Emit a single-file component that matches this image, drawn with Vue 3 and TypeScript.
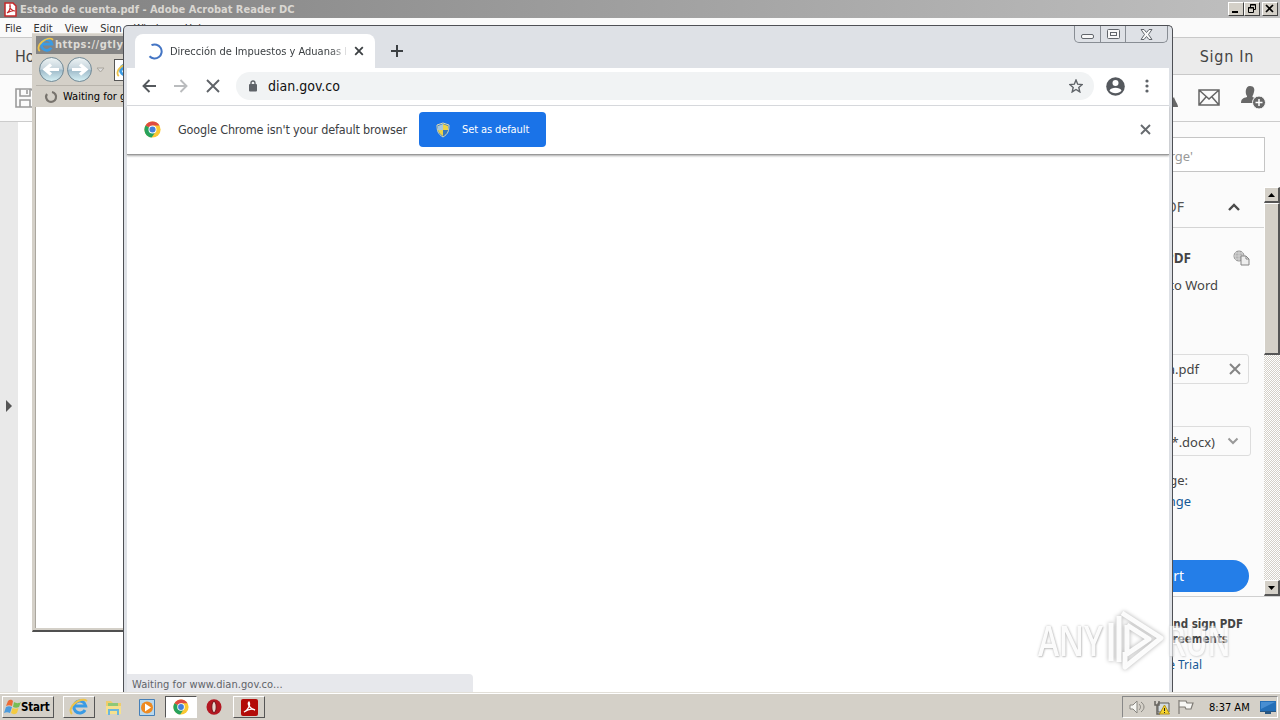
<script setup lang="ts">
const menus: string[] = ['File', 'Edit', 'View', 'Sign', 'Window', 'Help']
</script>

<template>
  <main class="desktop">
    <section class="acrobat">
      <header class="titlebar">
        <svg class="app-icon" width="13" height="15" viewBox="0 0 13 15"><path d="M1 1h8l3 3v10H1z" fill="#fff" stroke="#c4282a" stroke-width="1.5" /><path d="M3 11c2-1 4-5 3-8-1 3 2 6 5 6-3-1-6 1-8 2z" fill="none" stroke="#c4282a" stroke-width="1.2" /></svg>
        <b class="title-text">Estado de cuenta.pdf - Adobe Acrobat Reader DC</b>
        <div class="win-buttons">
          <i><svg width="14" height="12" viewBox="0 0 14 12"><path d="M3 9h6" stroke="#000" stroke-width="2" /></svg></i>
          <i><svg width="14" height="12" viewBox="0 0 14 12" fill="none" stroke="#000"><path d="M5.500 4V1.500h5v5H9M5 2h6M3.500 4.500h5v5h-5zM3 5h6" /></svg></i>
          <i class="gap"><svg width="14" height="12" viewBox="0 0 14 12"><path d="M3 2l7 7M10 2L3 9" stroke="#000" stroke-width="1.7" /></svg></i>
        </div>
      </header>
      <nav class="menubar"><span v-for="m in menus" :key="m" :class="m.toLowerCase()">{{ m }}</span></nav>
      <div class="hometabs"><span>Home</span><span class="signin">Sign In</span></div>
      <div class="tools">
        <svg class="save" width="20" height="20" viewBox="0 0 20 20" fill="none" stroke="#9b9b9b" stroke-width="1.6"><path d="M1 1h15l3 3v15H1zM5 1v7h10V1M12 2v4M5 19v-7h10v7" /></svg>
        <div class="tool-right">
          <svg width="12" height="22" viewBox="0 0 12 22"><path d="M3 20C5 13 7 11 8 10c1 4 4 7 4 10z" fill="#686868" /></svg>
          <svg class="mail" width="22" height="17" viewBox="0 0 22 17" fill="none" stroke="#666" stroke-width="1.5"><path d="M1 1h20v15H1zM1 1l10 9L21 1M1 16l7-8M21 16l-7-8" /></svg>
          <svg width="25" height="23" viewBox="0 0 25 23"><path d="M9 0c4 0 5 3 4 6-.5 2-1 3-1.500 4v1c3 1 4 2 4 6H0c0-4 2-5 6-6v-1C4 8 4 0 9 0" fill="#686868" /><circle cx="18" cy="16.500" r="6.500" fill="#686868" stroke="#fbfbfb" /><path d="M14.500 16.500h7M18 13v7" stroke="#fff" stroke-width="1.500" /></svg>
        </div>
      </div>
      <div class="acro-body">
        <aside class="left-rail"><svg width="8" height="12" viewBox="0 0 8 12"><path d="M1 0l6 6-6 6z" fill="#555" /></svg></aside>
        <div class="document"></div>
        <aside class="panel">
          <div class="search">Search 'Merge'</div>
          <div class="panel-scroll">
            <div class="panel-content">
              <div class="panel-head"><span>Export PDF</span><svg width="14" height="9" viewBox="0 0 14 9"><path d="M2 7l5-5 5 5" fill="none" stroke="#4a4a4a" stroke-width="2.400" /></svg></div>
              <div class="panel-title"><b>Adobe Export PDF</b><svg width="17" height="16" viewBox="0 0 17 16"><circle cx="6" cy="6" r="5" fill="#b4b4b4" stroke="#8f8f8f" /><path d="M1 6h10M6 1v10M2.500 3h7M2.500 9h7M3.500 2c-2 3-2 5 0 8M8.500 2c2 3 2 5 0 8" stroke="#ddd" stroke-width=".7" fill="none" /><path d="M8 6h5l3 3v6H8zM13 6v3h3" fill="#eee" stroke="#858585" /></svg></div>
              <div class="convert">Convert PDF Files to Word</div>
              <div class="filebox"><span>Estado de cuenta.pdf</span><svg width="12" height="12" viewBox="0 0 12 12"><path d="M1 1l10 10M11 1L1 11" stroke="#858585" stroke-width="2" /></svg></div>
              <div class="format"><span>Microsoft Word (*.docx)</span><svg width="12" height="8" viewBox="0 0 12 8"><path d="M1.500 1.500L6 6l4.500-4.500" fill="none" stroke="#999" stroke-width="2" /></svg></div>
              <div class="language">Document Language:</div>
              <div class="change">Change</div>
              <div class="convert-button">Convert</div>
            </div>
            <div class="scrollbar">
              <i class="up"><svg width="7" height="4" viewBox="0 0 7 4"><path d="M0 4l3.500-4L7 4z" /></svg></i>
              <i class="thumb"></i><i class="track"></i>
              <i class="down"><svg width="7" height="4" viewBox="0 0 7 4"><path d="M0 0h7L3.500 4z" /></svg></i>
            </div>
          </div>
          <footer class="panel-foot"><b>Create, edit and sign PDF</b><b class="second">forms &amp; agreements</b><span>Start Free Trial</span></footer>
        </aside>
      </div>
    </section>

    <section class="explorer">
      <header class="ie-title">
        <svg width="18" height="16" viewBox="0 0 20 18"><path d="M16 12a6 6 0 1 1 .7-4H6" fill="none" stroke="#3a9be4" stroke-width="3" /><path d="M3 16C-3 10 11-2 18 3" fill="none" stroke="#edc34b" stroke-width="2" /></svg>
        <b>https://gtly.to/</b>
      </header>
      <div class="ie-nav">
        <svg width="60" height="30" viewBox="0 0 60 30"><defs><linearGradient id="ball" x2="0" y2="1"><stop stop-color="#eef4f5" /><stop offset=".48" stop-color="#c6d4dc" /><stop offset=".52" stop-color="#9db9c8" /><stop offset="1" stop-color="#d8f2f6" /></linearGradient></defs><g fill="url(#ball)" stroke="#718894"><circle cx="15.500" cy="14.500" r="12" /><circle cx="43.500" cy="14.500" r="12" /></g><path d="M23 14.500H10m5-5-6 5 6 5M36 14.500h13m-5-5 6 5-6 5" fill="none" stroke="#fff" stroke-width="3.200" /></svg>
        <svg class="drop" width="9" height="6" viewBox="0 0 9 6"><path d="M1 1h7L4.500 5z" fill="#ddd" stroke="#aaa69e" /></svg>
        <div class="ie-address"><svg width="18" height="16" viewBox="0 0 20 18"><path d="M16 12a6 6 0 1 1 .7-4H6" fill="none" stroke="#3a9be4" stroke-width="3" /><path d="M3 16C-3 10 11-2 18 3" fill="none" stroke="#edc34b" stroke-width="2" /></svg></div>
      </div>
      <div class="ie-tab"><svg width="14" height="14" viewBox="0 0 14 14"><path d="M8 2a5 5 0 1 1-5 2" fill="none" stroke="#77736d" stroke-width="2.200" /></svg><span>Waiting for gtly.to</span></div>
      <div class="ie-page"></div>
    </section>

    <section class="chrome">
      <div class="tabstrip">
        <div class="tab">
          <svg class="spinner" width="16" height="18" viewBox="0 0 16 18"><path d="M4.500 3.200a7 7 0 1 1-2 11" fill="none" stroke="#4475c4" stroke-width="2" /></svg>
          <span class="tab-title">Dirección de Impuestos y Aduanas Nacionales</span>
          <svg width="10" height="10" viewBox="0 0 10 10"><path d="M1.200 1.200l7.600 7.600M8.800 1.200L1.200 8.800" stroke="#3c4043" stroke-width="1.800" /></svg>
        </div>
        <svg class="plus" width="12" height="12" viewBox="0 0 12 12"><path d="M6 0v12M0 6h12" stroke="#3c4043" stroke-width="2" /></svg>
        <div class="caption">
          <i><svg class="minimize" width="13" height="5" viewBox="0 0 13 5"><rect x=".5" y=".5" width="12" height="4" rx="1.500" /></svg></i>
          <i><svg width="13" height="10" viewBox="0 0 13 10"><rect x=".5" y=".5" width="12" height="9" rx="1" /><rect x="3.500" y="3.500" width="6" height="3" /></svg></i>
          <i><svg width="13" height="11" viewBox="0 0 13 11"><path d="M1 .5h3l2.500 3 2.500-3h3L8.500 5.500l3.500 5H9l-2.500-3-2.500 3H1l3.500-5z" /></svg></i>
        </div>
      </div>
      <div class="toolbar">
        <svg width="14" height="14" viewBox="0 0 14 14"><path d="M14 7H1M7.500 1L1.500 7l6 6" fill="none" stroke="#55595d" stroke-width="1.900" /></svg>
        <svg width="14" height="14" viewBox="0 0 14 14"><path d="M0 7h13M6.500 1l6 6-6 6" fill="none" stroke="#babcbe" stroke-width="1.900" /></svg>
        <svg width="14" height="14" viewBox="0 0 14 14"><path d="M1 1l12 12M13 1L1 13" stroke="#5f6368" stroke-width="1.900" /></svg>
        <div class="omnibox">
          <svg width="8" height="12" viewBox="0 0 8 12"><path d="M2 5V3a2 2 0 0 1 4 0v2" fill="none" stroke="#5f6368" stroke-width="1.400" /><rect y="4" width="8" height="7.500" rx="1" fill="#5f6368" /></svg>
          <span>dian.gov.co</span>
          <svg class="star" width="14" height="14" viewBox="0 0 14 14"><path d="M7 1l1.700 4.200 4.500.4-3.400 2.900 1 4.400L7 10.500l-3.800 2.400 1-4.400L.8 5.600l4.500-.4z" fill="none" stroke="#5f6368" stroke-width="1.400" /></svg>
        </div>
        <svg class="avatar" width="19" height="19" viewBox="0 0 19 19"><circle cx="9.500" cy="9.500" r="9.300" fill="#55595e" /><circle cx="9.500" cy="6" r="3" fill="#fff" /><path d="M3.500 13.500C5 9.800 14 9.800 15.500 13.500 13 17 6 17 3.500 13.500" fill="#fff" /></svg>
        <svg class="dots" width="4" height="14" viewBox="0 0 4 14" fill="#5f6368"><circle cx="2" cy="2" r="1.600" /><circle cx="2" cy="7" r="1.600" /><circle cx="2" cy="12" r="1.600" /></svg>
      </div>
      <div class="infobar">
        <svg width="17" height="17" viewBox="0 0 20 20"><circle cx="10" cy="10" r="9.500" fill="#fac832" /><path d="M10 10L1.800 5.200A9.500 9.500 0 0 1 18.200 5.200H10z" fill="#df4b42" /><path d="M10 10L1.800 5.200A9.500 9.500 0 0 0 9 19.500L14 12z" fill="#27a25d" /><circle cx="10" cy="10" r="4.700" fill="#fff" /><circle cx="10" cy="10" r="3.600" fill="#437fda" /></svg>
        <span class="info-text">Google Chrome isn't your default browser</span>
        <div class="default-button"><svg width="14" height="16" viewBox="0 0 14 16"><path d="M7 1l6 2c0 6-1 9-6 12C2 12 1 9 1 3z" fill="#3578bc" stroke="#ddd8b2" /><path d="M7 2l5 2v4H7zM2 8h5v6C4 12 2.500 10 2 8" fill="#ecd347" /><path d="M2 4l5-2v6H2z" fill="#a8c8dc" /></svg><span>Set as default</span></div>
        <svg class="info-close" width="11" height="11" viewBox="0 0 11 11"><path d="M1 1l9 9M10 1l-9 9" stroke="#676b6f" stroke-width="1.900" /></svg>
      </div>
      <div class="page"><div class="status">Waiting for www.dian.gov.co...</div></div>
    </section>

    <div class="watermark">
      <span>ANY</span>
      <svg width="62" height="64" viewBox="0 0 62 64"><path d="M6 15v38M14 8v46M17 5l39 25-36 29V44M22 17l22 14-22 15V17" /></svg>
      <span class="run">RUN</span>
    </div>

    <footer class="taskbar">
      <div class="start"><svg width="17" height="16" viewBox="0 0 17 16"><path d="M4 2c2-2 4-1 5 0L8 7C6 6 4 6 2 7z" fill="#ed6b36" /><path d="M10 3c2 1 4 2 7 0l-2 5c-2 1-4 1-6 0z" fill="#77bd55" /><path d="M2 8c2-1 4-1 6 0l-2 6c-2-1-4-1-6 0z" fill="#4c9bdd" /><path d="M8.500 9c2 1 4 1 6 0l-1.500 5c-3 2-4 1-6 0z" fill="#f4cb42" /></svg><b>Start</b></div>
      <div class="task raised"><svg width="20" height="18" viewBox="0 0 20 18"><path d="M16 12a6 6 0 1 1 .7-4H6" fill="none" stroke="#3a9be4" stroke-width="3" /><path d="M3 16C-3 10 11-2 18 3" fill="none" stroke="#edc34b" stroke-width="2" /></svg></div>
      <div class="task folder"><svg width="17" height="17" viewBox="0 0 17 17"><path d="M1 2h5l2 2h8v11H1z" fill="#efcd6c" /><path d="M3 4h10v4H3z" fill="#8ec877" /><path d="M1 7h15v8H1z" fill="#f6e08e" /><path d="M4 16v-5h9v5" fill="none" stroke="#6cb7dc" stroke-width="2" /></svg></div>
      <div class="task player"><svg width="16" height="17" viewBox="0 0 16 17"><path d="M.5.500h15v16H.5z" fill="#b9d8ed" stroke="#4680b8" /><circle cx="8" cy="8.500" r="6" fill="#ee8a21" /><path d="M6 4.500v8l6-4z" fill="#fff" /></svg></div>
      <div class="task active"><svg width="16" height="16" viewBox="0 0 20 20"><circle cx="10" cy="10" r="9.500" fill="#fac832" /><path d="M10 10L1.800 5.200A9.500 9.500 0 0 1 18.200 5.200H10z" fill="#df4b42" /><path d="M10 10L1.800 5.200A9.500 9.500 0 0 0 9 19.500L14 12z" fill="#27a25d" /><circle cx="10" cy="10" r="4.700" fill="#fff" /><circle cx="10" cy="10" r="3.600" fill="#437fda" /></svg></div>
      <div class="task opera"><svg width="16" height="16" viewBox="0 0 16 16"><ellipse cx="8" cy="8" rx="7.500" ry="7.700" fill="#b31722" /><ellipse cx="8" cy="8" rx="2.200" ry="5.600" fill="#e8d5ce" stroke="#701018" /></svg></div>
      <div class="task raised pdf"><svg width="17" height="17" viewBox="0 0 17 17"><rect width="17" height="17" rx="2" fill="#b30b08" /><path d="M3 13c3-1 7-7 5-10-2 2 1 7 6 8-4-2-8 0-11 2z" fill="none" stroke="#fff" stroke-width="1.300" /></svg></div>
      <div class="tray">
        <svg width="18" height="16" viewBox="0 0 18 16" fill="none" stroke="#888680"><path d="M1 6v4h3l4 4V2L4 6z" fill="#f6f6f2" /><path d="M10 5c2 2 2 4 0 6M12 3c4 3 4 7 0 10" /></svg>
        <svg width="16" height="15" viewBox="0 0 16 15"><path d="M4 3h11v9H4z" fill="#d3dadd" stroke="#5b5b58" /><path d="M1 1v4h4V1M3 5v9h3" fill="none" stroke="#66635d" stroke-width="1.500" /><path d="M10.500 5l5 9h-10z" fill="#f7d52e" stroke="#b49216" /><path d="M10.500 8v3M10.500 12v1" stroke="#222" /></svg>
        <svg width="17" height="16" viewBox="0 0 17 16"><path d="M2 1v14M2 2h7l1 2h6l-2 6H9L8 8H2z" fill="#f8f8f5" stroke="#7e7b75" stroke-width="1.200" /></svg>
        <span>8:37 AM</span>
        <svg class="monitor" width="16" height="13" viewBox="0 0 16 13"><path d="M0 0h16v10H0z" fill="#246fb7" /><path d="M1 1h14L1 8z" fill="#478ed2" /><path d="M0 10h16v1H0zM5 11h6v2H5z" fill="#285782" /></svg>
      </div>
    </footer>
  </main>
</template>

<style>
body { margin: 0; overflow: hidden; }
</style>
<style scoped>
* { box-sizing: border-box; }
.desktop { position: relative; width: 1280px; height: 720px; overflow: hidden; font: 11px/1.2 "DejaVu Sans Condensed", "DejaVu Sans", sans-serif; background: #fff; color: #111; white-space: nowrap; }
svg { flex: none; display: block; }
i { font-style: normal; }
.acrobat { height: 692px; display: flex; flex-direction: column; background: #fbfbfb; }
.titlebar { height: 18px; flex: none; display: flex; align-items: center; padding: 0 2px 0 4px; background: linear-gradient(90deg, #808080, #c0c0c0); color: #dad7d2; }
.title-text { margin: 1px 0 0 3px; }
.win-buttons { display: flex; margin-left: auto; }
.win-buttons i { width: 16px; height: 14px; background: #d4d0c8; border: 1px solid; border-color: #fff #404040 #404040 #fff; }
.win-buttons .gap { margin-left: 2px; }
.menubar { height: 19px; flex: none; padding: 4px 0 0 5px; display: flex; color: #333; background: #fafafa; }
.menubar span { margin-right: 12px; }
.hometabs { height: 38px; flex: none; display: flex; align-items: center; justify-content: space-between; padding: 1px 26px 0 15px; background: #ebebeb; border: solid #c9c9c9; border-width: 1px 0; font-size: 16px; color: #444; }
.signin { letter-spacing: .7px; }
.tools { height: 47px; flex: none; display: flex; align-items: center; justify-content: space-between; padding: 0 14px 1px 15px; border-bottom: 1px solid #ccc; background: #fbfbfb; }
.tool-right { display: flex; align-items: center; }
.tool-right .mail { margin: 0 21px 0 20px; }
.acro-body { flex: 1; min-height: 0; display: flex; }
.left-rail { width: 18px; background: #e9e9e9; padding: 278px 0 0 5px; }
.document { flex: 1; background: #fff; }
.panel { width: 250px; background: #fbfbfb; display: flex; flex-direction: column; color: #444; font: 13px/18px "Noto Sans", sans-serif; }
.search { width: 210px; height: 35px; margin: 15px 15px 15px auto; border: 1px solid #c5c5c5; background: #fff; color: #999; padding: 9px 71px 0 0; text-align: right; font-size: 13px; flex: none; }
.panel-scroll { height: 410px; flex: none; display: flex; border-bottom: 1px solid #d0d0d0; }
.panel-content { flex: 1; display: flex; flex-direction: column; align-items: flex-end; }
.panel-head { height: 41px; width: 100%; display: flex; justify-content: flex-end; align-items: center; padding-right: 23px; border-bottom: 1px solid #d4d4d4; font-size: 14px; color: #555; }
.panel-head span { margin-right: 43px; }
.panel-title { margin-top: 21px; height: 18px; padding-right: 14px; display: flex; align-items: center; font-size: 13.500px; }
.panel-title svg { margin-left: 42px; }
.convert { margin-top: 9px; padding-right: 46px; }
.filebox, .format { width: 200px; height: 30px; border: 1px solid #ddd; border-radius: 3px; display: flex; align-items: center; justify-content: flex-end; }
.filebox { margin: 60px 15px 0 0; padding-right: 7px; }
.filebox span { margin-right: 30px; }
.format { margin: 42px 13px 0 0; padding-right: 11px; }
.format span { margin: 1px 12px 0 0; }
.language { margin-top: 15px; padding-right: 76px; }
.change { margin-top: 3px; padding-right: 73px; color: #165996; }
.convert-button { margin: 50px 15px 0 0; width: 160px; height: 32px; border-radius: 16px; background: #247ee8; color: #fff; text-align: right; padding: 7px 65px 0 0; font-size: 14px; }
.scrollbar { width: 16px; display: flex; flex-direction: column; background: repeating-conic-gradient(#fff 0 25%, #d4d0c8 0 50%) 0 0/2px 2px; }
.up, .down, .thumb { display: block; background: #d4d0c8; border: solid; border-width: 1px 2px 2px 1px; border-color: #fff #555 #555 #fff; }
.up, .down { height: 16px; display: flex; align-items: center; justify-content: center; }
.thumb { height: 152px; }
.track { flex: 1; }
.panel-foot { padding: 20px 37px 0 0; text-align: right; font-size: 12px; line-height: 15px; display: flex; flex-direction: column; }
.panel-foot b { font: bold 11.500px/15px "DejaVu Sans Condensed", "DejaVu Sans", sans-serif; }
.panel-foot .second { padding-right: 15px; }
.panel-foot span { padding-right: 41px; margin-top: 10px; color: #165996; }
.explorer { position: absolute; left: 32px; top: 33px; width: 240px; height: 599px; background: #d4d0c8; border: solid; border-width: 1px 1px 2px; border-color: #e0ddd5 #555 #505050 #d4d0c8; padding: 2px 2px 2px 3px; display: flex; flex-direction: column; }
.ie-title { height: 18px; flex: none; display: flex; align-items: center; background: #848484; color: #dedbd6; padding-left: 1px; }
.ie-title b { letter-spacing: .5px; }
.ie-nav { height: 31px; flex: none; display: flex; align-items: center; }
.drop { margin-right: 9px; }
.ie-address { flex: 1; height: 22px; background: #fff; border: 1px solid #555; display: flex; align-items: center; padding-left: 1px; }
.ie-tab { height: 22px; flex: none; display: flex; align-items: center; padding: 1px 0 0 8px; color: #000; border-top: 1px solid #b8b4ac; }
.ie-tab span { margin-left: 5px; }
.ie-page { flex: 1; background: #fff; border-left: 1px solid #aaa69e; margin-left: -1px; }
.chrome { position: absolute; left: 123px; top: 25px; width: 1050px; height: 667px; border: 1px solid #4e5055; border-bottom: 0; border-radius: 5px 5px 0 0; background: #dee1e6; padding: 0 3px; display: flex; flex-direction: column; }
.tabstrip { height: 42px; flex: none; display: flex; padding-left: 8px; }
.tab { width: 240px; margin-top: 8px; background: #fff; border-radius: 8px 8px 0 0; display: flex; align-items: center; padding: 0 11px 0 12px; }
.tab-title { margin: 1px 8px 0 7px; width: 176px; overflow: hidden; color: #3c4043; mask-image: linear-gradient(90deg, #000 160px, transparent 180px); }
.plus { margin: 19px 0 0 16px; }
.caption { display: flex; height: 17px; margin: 0 1px 0 auto; border: 1px solid #888d94; border-top: 0; border-radius: 0 0 5px 5px; }
.caption i { width: 25px; display: flex; align-items: center; justify-content: center; }
.caption i + i { border-left: 1px solid #888d94; }
.caption i:last-child { width: 42px; }
.caption svg { fill: #f8f8f8; stroke: #62666c; }
.caption .minimize { margin-top: 4px; }
.toolbar { height: 38px; flex: none; background: #fff; display: flex; align-items: center; padding: 0 20px 1px 15px; border-bottom: 1px solid #dadce0; gap: 18px; }
.omnibox { flex: 1; height: 28px; border-radius: 14px; background: #f1f3f4; display: flex; align-items: center; padding: 0 11px 0 13px; margin-left: -2px; }
.omnibox span { margin-left: 11px; font: 14px/18px "DejaVu Sans Condensed", "DejaVu Sans", sans-serif; }
.star { margin-left: auto; }
.avatar { margin: 0 2px 0 -6px; }
.infobar { height: 49px; flex: none; display: flex; align-items: center; background: #fff; padding: 0 18px 1px 17px; border-bottom: 1px solid #999; position: relative; z-index: 1; box-shadow: 0 1px 2px #aaa; }
.info-text { margin-left: 17px; width: 229px; color: #3c4043; font-size: 12.500px; letter-spacing: -.15px; }
.default-button { width: 127px; height: 35px; margin-left: 12px; border-radius: 4px; background: #1a73e8; color: #fff; display: flex; align-items: center; padding-left: 17px; }
.default-button span { margin-left: 12px; letter-spacing: -.1px; }
.info-close { margin-left: auto; }
.page { flex: 1; background: #fff; display: flex; align-items: flex-end; }
.status { width: 346px; height: 18px; border-radius: 0 4px 0 0; background: #e7e8ec; color: #5f6368; padding: 4px 5px 0; letter-spacing: .05px; }
.watermark { position: absolute; left: 1038px; top: 608px; display: flex; align-items: center; color: #fffffff0; font: 600 42px/64px "Open Sans", sans-serif; text-shadow: 0 0 3px #bbb, 1px 1px 2px #ccc; }
.watermark span { width: 67px; transform: scaleX(.76); transform-origin: left; }
.watermark .run { opacity: .62; transform: scaleX(.7); }
.watermark svg { fill: none; stroke: #fffffff0; stroke-width: 5; stroke-linejoin: round; filter: drop-shadow(0 0 2px #aaa); }
.taskbar { position: absolute; left: 0; top: 692px; width: 1280px; height: 28px; border-top: 1px solid #e2dfd8; background: #d4d0c8; display: flex; align-items: center; padding: 1px 2px 0; box-shadow: inset 0 1px #fff; }
.start { width: 52px; height: 22px; border: 1px solid; border-color: #fff #555 #555 #fff; display: flex; align-items: center; padding-left: 1px; }
.start b { font-size: 11.500px; color: #000; margin-top: 1px; letter-spacing: -.2px; }
.task { display: flex; align-items: center; justify-content: center; height: 22px; width: 32px; }
.task.raised { margin-left: 9px; border: 1px solid; border-color: #fff #555 #555 #fff; }
.folder { margin-left: 2px; }
.player { margin-left: 2px; }
.task.active { margin-left: 2px; background: #fff; border: 1px solid; border-color: #555 #fff #fff #555; }
.opera { margin-left: 1px; }
.task.pdf { margin-left: 3px; }
.tray { margin-left: auto; width: 156px; height: 22px; border: 1px solid; border-color: #888 #fff #fff #888; display: flex; align-items: center; padding: 0 1px 0 6px; color: #000; gap: 7px; }
.tray span { margin: 1px 0 0 8px; width: 42px; }
.monitor { margin-left: auto; }
</style>
